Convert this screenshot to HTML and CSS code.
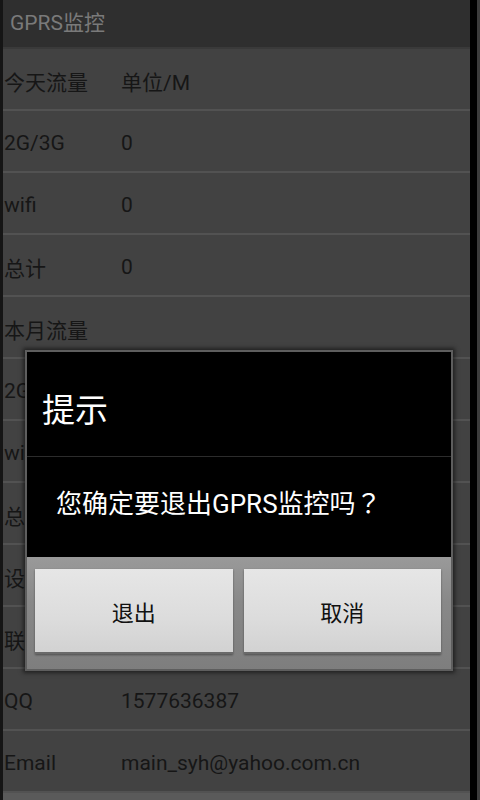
FILE: index.html
```html
<!DOCTYPE html>
<html>
<head>
<meta charset="utf-8">
<link rel="stylesheet" href="styles.css">
</head>
<body>
<div class="screen">
  <div class="edge-left"></div>
  <div class="main">
    <div class="titlebar">GPRS监控</div>
    <div class="row"><span class="label">今天流量</span><span class="value">单位/M</span></div>
    <div class="row"><span class="label">2G/3G</span><span class="value">0</span></div>
    <div class="row"><span class="label">wifi</span><span class="value">0</span></div>
    <div class="row"><span class="label">总计</span><span class="value">0</span></div>
    <div class="row"><span class="label">本月流量</span><span class="value"></span></div>
    <div class="row"><span class="label">2G/3G</span><span class="value">0</span></div>
    <div class="row"><span class="label">wifi</span><span class="value">0</span></div>
    <div class="row"><span class="label">总计</span><span class="value">0</span></div>
    <div class="row"><span class="label">设置</span><span class="value"></span></div>
    <div class="row"><span class="label">联系作者</span><span class="value"></span></div>
    <div class="row"><span class="label">QQ</span><span class="value">1577636387</span></div>
    <div class="row"><span class="label">Email</span><span class="value">main_syh@yahoo.com.cn</span></div>
    <div class="footer"></div>
  </div>
  <div class="edge-right"></div>
  <div class="edge-far"></div>

  <div class="dialog">
    <div class="dlg-title">提示</div>
    <div class="dlg-msg">您确定要退出GPRS监控吗<span class="fw">？</span></div>
    <div class="dlg-buttons">
      <div class="btn">退出</div>
      <div class="btn">取消</div>
    </div>
  </div>
</div>
</body>
</html>
```
FILE: styles.css
```css
html, body {
  margin: 0;
  padding: 0;
  background: #000;
}
body {
  width: 480px;
  height: 800px;
  overflow: hidden;
  font-family: Roboto, "Noto Sans CJK SC", sans-serif;
}
.screen {
  position: relative;
  display: flex;
  width: 480px;
  height: 800px;
}
.edge-left {
  width: 3px;
  background: #151515;
}
.edge-right {
  width: 7px;
  background: #000;
}
.edge-far {
  width: 3px;
  background: #3c3c3c;
}
.main {
  width: 467px;
  display: flex;
  flex-direction: column;
  background: #424242;
}
.titlebar {
  height: 49px;
  flex: none;
  box-sizing: border-box;
  background: #2f2f2f;
  border-bottom: 2px solid #3a3a3a;
  color: #7a7a7a;
  font-size: 21px;
  line-height: 47px;
  padding-left: 7px;
}
.row {
  height: 62px;
  flex: none;
  box-sizing: border-box;
  border-bottom: 2px solid #525252;
  display: grid;
  grid-template-columns: 117px 1fr;
  align-items: center;
  padding: 4px 0 0 1px;
  color: #161616;
  font-size: 21px;
}
.footer {
  flex: 1;
  background: #5a5a5a;
}
.dialog {
  position: absolute;
  left: 25px;
  top: 350px;
  width: 428px;
  box-sizing: border-box;
  border: 2px solid #5e5e5e;
  box-shadow: 0 0 4px 2px rgba(0,0,0,0.5);
  background: #000;
}
.dlg-title {
  height: 105px;
  box-sizing: border-box;
  border-bottom: 1px solid #2c2c2c;
  color: #fff;
  font-size: 33px;
  line-height: 93px;
  padding: 12px 0 0 15px;
}
.dlg-msg {
  height: 100px;
  color: #fff;
  font-size: 26px;
  line-height: 90px;
  padding-left: 29px;
}
.fw {
  font-family: "Noto Sans CJK JP", "Noto Sans CJK SC", sans-serif;
}
.dlg-buttons {
  display: flex;
  gap: 11px;
  padding: 12px 10px 15px 8px;
  background: linear-gradient(#9a9a9a, #888 40%, #7e7e7e);
}
.btn {
  flex: 1;
  height: 83px;
  display: flex;
  align-items: center;
  justify-content: center;
  background: linear-gradient(#e6e6e6, #dcdcdc 60%, #d2d2d2);
  border-bottom: 2px solid #6a6a6a;
  box-shadow: 0 1px 2px rgba(0,0,0,0.4);
  color: #111;
  font-size: 22px;
}
```
